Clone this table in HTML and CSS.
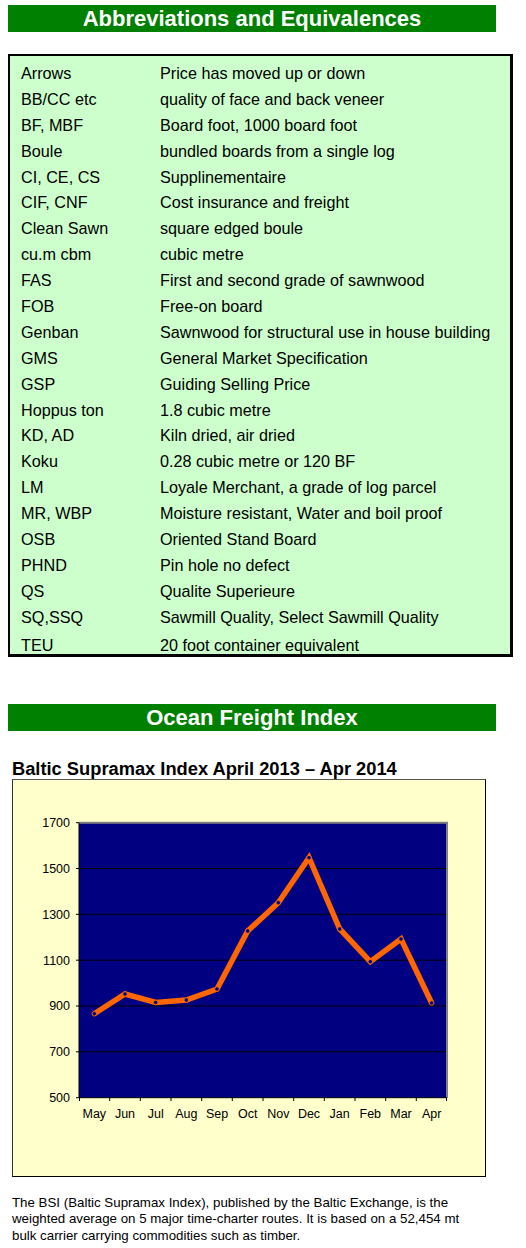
FILE: index.html
```html
<!DOCTYPE html>
<html>
<head>
<meta charset="utf-8">
<link rel="stylesheet" href="styles.css">
</head>
<body>
<div class="page">
  <h2 class="banner banner-first">Abbreviations and Equivalences</h2>
  <div class="abbr-box">
    <div class="row"><span class="term">Arrows</span><span class="def">Price has moved up or down</span></div>
    <div class="row"><span class="term">BB/CC etc</span><span class="def">quality of face and back veneer</span></div>
    <div class="row"><span class="term">BF, MBF</span><span class="def">Board foot, 1000 board foot</span></div>
    <div class="row"><span class="term">Boule</span><span class="def">bundled boards from a single log</span></div>
    <div class="row"><span class="term">CI, CE, CS</span><span class="def">Supplinementaire</span></div>
    <div class="row"><span class="term">CIF, CNF</span><span class="def">Cost insurance and freight</span></div>
    <div class="row"><span class="term">Clean Sawn</span><span class="def">square edged boule</span></div>
    <div class="row"><span class="term">cu.m cbm</span><span class="def">cubic metre</span></div>
    <div class="row"><span class="term">FAS</span><span class="def">First and second grade of sawnwood</span></div>
    <div class="row"><span class="term">FOB</span><span class="def">Free-on board</span></div>
    <div class="row"><span class="term">Genban</span><span class="def">Sawnwood for structural use in house building</span></div>
    <div class="row"><span class="term">GMS</span><span class="def">General Market Specification</span></div>
    <div class="row"><span class="term">GSP</span><span class="def">Guiding Selling Price</span></div>
    <div class="row"><span class="term">Hoppus ton</span><span class="def">1.8 cubic metre</span></div>
    <div class="row"><span class="term">KD, AD</span><span class="def">Kiln dried, air dried</span></div>
    <div class="row"><span class="term">Koku</span><span class="def">0.28 cubic metre or 120 BF</span></div>
    <div class="row"><span class="term">LM</span><span class="def">Loyale Merchant, a grade of log parcel</span></div>
    <div class="row"><span class="term">MR, WBP</span><span class="def">Moisture resistant, Water and boil proof</span></div>
    <div class="row"><span class="term">OSB</span><span class="def">Oriented Stand Board</span></div>
    <div class="row"><span class="term">PHND</span><span class="def">Pin hole no defect</span></div>
    <div class="row"><span class="term">QS</span><span class="def">Qualite Superieure</span></div>
    <div class="row"><span class="term">SQ,SSQ</span><span class="def">Sawmill Quality, Select Sawmill Quality</span></div>
    <div class="row row-last"><span class="term">TEU</span><span class="def">20 foot container equivalent</span></div>
  </div>

  <h2 class="banner banner-second">Ocean Freight Index</h2>
  <h3 class="chart-title">Baltic Supramax Index April 2013 – Apr 2014</h3>
  <div class="chart-box">
    <svg class="chart" width="472" height="396" viewBox="0 0 472 396" xmlns="http://www.w3.org/2000/svg">
      <rect x="66" y="42.7" width="368" height="275" fill="#000080"/>
      <g stroke="#000" stroke-width="1">
        <line x1="66" y1="88.5" x2="434" y2="88.5"/>
        <line x1="66" y1="134.3" x2="434" y2="134.3"/>
        <line x1="66" y1="180.2" x2="434" y2="180.2"/>
        <line x1="66" y1="226" x2="434" y2="226"/>
        <line x1="66" y1="271.8" x2="434" y2="271.8"/>
      </g>
      <g stroke="#808080" stroke-width="2" fill="none">
        <polyline points="66,42.7 434,42.7 434,317.7"/>
      </g>
      <g stroke="#000" stroke-width="1">
        <line x1="66" y1="42.7" x2="66" y2="318"/>
        <line x1="66" y1="317.7" x2="434" y2="317.7"/>
        <line x1="63" y1="42.7" x2="66" y2="42.7"/>
        <line x1="63" y1="88.5" x2="66" y2="88.5"/>
        <line x1="63" y1="134.3" x2="66" y2="134.3"/>
        <line x1="63" y1="180.2" x2="66" y2="180.2"/>
        <line x1="63" y1="226" x2="66" y2="226"/>
        <line x1="63" y1="271.8" x2="66" y2="271.8"/>
        <line x1="63" y1="317.7" x2="66" y2="317.7"/>
        <line x1="66.5" y1="317.7" x2="66.5" y2="321"/>
        <line x1="96.7" y1="317.7" x2="96.7" y2="321"/>
        <line x1="127.3" y1="317.7" x2="127.3" y2="321"/>
        <line x1="158" y1="317.7" x2="158" y2="321"/>
        <line x1="188.7" y1="317.7" x2="188.7" y2="321"/>
        <line x1="219.3" y1="317.7" x2="219.3" y2="321"/>
        <line x1="250" y1="317.7" x2="250" y2="321"/>
        <line x1="280.7" y1="317.7" x2="280.7" y2="321"/>
        <line x1="311.3" y1="317.7" x2="311.3" y2="321"/>
        <line x1="342" y1="317.7" x2="342" y2="321"/>
        <line x1="372.7" y1="317.7" x2="372.7" y2="321"/>
        <line x1="403.3" y1="317.7" x2="403.3" y2="321"/>
        <line x1="433.5" y1="317.7" x2="433.5" y2="321"/>
      </g>
      <g class="axis-label" text-anchor="end">
        <text x="57" y="47">1700</text>
        <text x="57" y="92.8">1500</text>
        <text x="57" y="138.6">1300</text>
        <text x="57" y="184.5">1100</text>
        <text x="57" y="230.3">900</text>
        <text x="57" y="276.1">700</text>
        <text x="57" y="322">500</text>
      </g>
      <g class="axis-label" text-anchor="middle">
        <text x="81.3" y="337.5">May</text>
        <text x="112" y="337.5">Jun</text>
        <text x="142.7" y="337.5">Jul</text>
        <text x="173.3" y="337.5">Aug</text>
        <text x="204" y="337.5">Sep</text>
        <text x="234.7" y="337.5">Oct</text>
        <text x="265.3" y="337.5">Nov</text>
        <text x="296" y="337.5">Dec</text>
        <text x="326.7" y="337.5">Jan</text>
        <text x="357.3" y="337.5">Feb</text>
        <text x="388" y="337.5">Mar</text>
        <text x="418.7" y="337.5">Apr</text>
      </g>
      <polyline fill="none" stroke="#ff6600" stroke-width="5.5" stroke-linejoin="miter"
        points="81.3,233.7 112,214 142.7,222.5 173.3,220 204,209 234.7,151 265.3,122.7 296,77.7 326.7,149 357.3,181.7 388,159 418.7,223"/>
      <g fill="#000080" stroke="#ff6600" stroke-width="1">
        <circle cx="81.3" cy="233.7" r="2.3"/>
        <circle cx="112" cy="214" r="2.3"/>
        <circle cx="142.7" cy="222.5" r="2.3"/>
        <circle cx="173.3" cy="220" r="2.3"/>
        <circle cx="204" cy="209" r="2.3"/>
        <circle cx="234.7" cy="151" r="2.3"/>
        <circle cx="265.3" cy="122.7" r="2.3"/>
        <circle cx="296" cy="77.7" r="2.3"/>
        <circle cx="326.7" cy="149" r="2.3"/>
        <circle cx="357.3" cy="181.7" r="2.3"/>
        <circle cx="388" cy="159" r="2.3"/>
        <circle cx="418.7" cy="223" r="2.3"/>
      </g>
    </svg>
  </div>
  <p class="note">The BSI (Baltic Supramax Index), published by the Baltic Exchange, is the<br>weighted average on 5 major time-charter routes. It is based on a 52,454 mt<br>bulk carrier carrying commodities such as timber.</p>
</div>
</body>
</html>
```

FILE: styles.css
```css
html, body {
  margin: 0;
  padding: 0;
  background: #ffffff;
}

body {
  font-family: "Liberation Sans", Arial, sans-serif;
  color: #000;
}

.page {
  width: 526px;
  padding-top: 5px;
}

.banner {
  margin: 0 0 0 8px;
  width: 488px;
  height: 27px;
  background: #008000;
  color: #ffffff;
  font-size: 22px;
  font-weight: bold;
  line-height: 27px;
  text-align: center;
}

.abbr-box {
  margin: 22px 0 0 8px;
  width: 505px;
  height: 603px;
  box-sizing: border-box;
  border-style: solid;
  border-color: #000;
  border-width: 2px 3px 3px 2px;
  background: #ccffcc;
  padding: 5px 0 0 11px;
  overflow: hidden;
}

.row {
  display: flex;
  height: 25.9px;
  line-height: 25.9px;
  font-size: 16.2px;
  white-space: nowrap;
}

.row-last {
  margin-top: 2px;
}

.term {
  width: 139px;
  flex: none;
}

.def {
  flex: 1;
}

.banner-second {
  margin-top: 47px;
}

.chart-title {
  margin: 28px 0 0 12px;
  font-size: 18.3px;
  font-weight: bold;
  line-height: 20px;
  height: 20px;
}

.chart-box {
  margin-left: 12px;
  width: 474px;
  height: 398px;
  box-sizing: border-box;
  background: #ffffcc;
  border: 1px solid #000;
  border-top-color: #555;
  border-left-color: #333;
}

.chart {
  display: block;
}

.axis-label {
  font-family: "Liberation Sans", Arial, sans-serif;
  font-size: 12.5px;
  fill: #000;
}

.note {
  margin: 18px 0 0 12px;
  font-size: 13.3px;
  line-height: 16.4px;
}
```
